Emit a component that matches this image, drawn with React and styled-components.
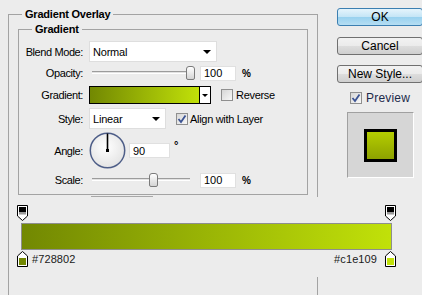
import React from 'react';
import styled, { createGlobalStyle } from 'styled-components';

const GlobalStyle = createGlobalStyle`
  html, body {
    margin: 0;
    padding: 0;
    background: #ececec;
  }
  body {
    font-family: 'Liberation Sans', Arial, sans-serif;
    font-size: 11px;
    color: #000;
  }
`;

const line = '#a3a3a3';

const Page = styled.div`
  display: flex;
  width: 422px;
  height: 295px;
  overflow: hidden;
  background: #ececec;
`;

const Main = styled.div`
  width: 310px;
  padding: 8px 0 0 8px;
  flex-shrink: 0;
`;

const Group = styled.div`
  display: flex;
  flex-direction: column;
  height: ${({ $fill }) => ($fill ? '100%' : 'auto')};
`;

const GroupHead = styled.div`
  display: flex;
  height: 12px;
`;

const HeadCap = styled.div`
  align-self: flex-end;
  height: 5px;
  border-top: 1px solid ${line};
  border-left: ${({ $side }) => ($side === 'left' ? `1px solid ${line}` : 'none')};
  border-right: ${({ $side }) => ($side === 'right' ? `1px solid ${line}` : 'none')};
  width: ${({ $side }) => ($side === 'left' ? '13px' : 'auto')};
  flex: ${({ $side }) => ($side === 'right' ? 1 : 'none')};
`;

const HeadTitle = styled.span`
  padding: 0 3px;
  font-weight: bold;
  line-height: 12px;
  letter-spacing: -0.2px;
  white-space: nowrap;
`;

const GroupBody = styled.div`
  display: flex;
  flex-direction: column;
  border-left: 1px solid ${line};
  border-right: 1px solid ${line};
  border-bottom: ${({ $closed }) => ($closed ? `1px solid ${line}` : 'none')};
  padding: ${({ $pad }) => $pad};
  flex: 1;
`;

const Row = styled.div`
  display: grid;
  grid-template-columns: 64px 1fr;
  column-gap: 6px;
  align-items: center;
  height: ${({ $h }) => $h}px;
  margin-top: ${({ $mt }) => $mt || 0}px;
`;

const Label = styled.span`
  text-align: right;
  letter-spacing: -0.4px;
  white-space: nowrap;
`;

const Controls = styled.div`
  display: flex;
  align-items: center;
  height: 100%;
`;

const Select = styled.div`
  display: flex;
  align-items: center;
  box-sizing: border-box;
  width: ${({ $w }) => $w}px;
  height: 21px;
  padding-left: 3px;
  background: #fff;
  border: 1px solid #dedede;
  letter-spacing: -0.2px;
`;

const Caret = styled.span`
  margin-left: auto;
  margin-right: ${({ $mr }) => $mr ?? 5}px;
  width: 0;
  height: 0;
  border-left: ${({ $s }) => $s}px solid transparent;
  border-right: ${({ $s }) => $s}px solid transparent;
  border-top: ${({ $s }) => $s}px solid #000;
`;

const SliderBox = styled.div`
  position: relative;
  width: 111px;
  height: 16px;
`;

const Track = styled.div`
  margin: 6px 0 0 3px;
  width: 98px;
  height: 1px;
  background: #e2e2e2;
  border-top: 1px solid #9c9c9c;
  border-bottom: 1px solid #fff;
`;

const Thumb = styled.div`
  position: absolute;
  top: 1px;
  width: 7px;
  height: 12px;
  border: 1px solid #7b7b7b;
  border-radius: 3px 3px 2px 2px;
  background: linear-gradient(#ffffff, #d4d4d4);
`;

const Field = styled.div`
  display: flex;
  align-items: center;
  box-sizing: border-box;
  width: ${({ $w }) => $w}px;
  height: 15px;
  padding-left: 3px;
  margin-left: ${({ $ml }) => $ml || 0}px;
  background: #fff;
  border: 1px solid #e0e0e0;
`;

const Unit = styled.span`
  margin-left: 6px;
  font-weight: bold;
  font-size: 10px;
`;

const Degree = styled.span`
  align-self: flex-start;
  margin: 7px 0 0 4px;
  font-size: 11px;
  font-weight: bold;
`;

const Swatch = styled.div`
  display: flex;
  box-sizing: border-box;
  width: 122px;
  height: 18px;
  border: 1px solid #000;
`;

const SwatchFill = styled.div`
  flex: 1;
  background: linear-gradient(to right, #728802, #c1e109);
  border-right: 1px solid #000;
`;

const SwatchArrow = styled.div`
  display: flex;
  align-items: center;
  justify-content: center;
  width: 10px;
  background: #fff;
`;

const Check = styled.div`
  display: flex;
  align-items: center;
  justify-content: center;
  box-sizing: border-box;
  width: 12px;
  height: 12px;
  margin-left: ${({ $ml }) => $ml || 0}px;
  border: 1px solid #8f8f8f;
  background: linear-gradient(135deg, #d6d6d6, #f8f8f8);
`;

const CheckText = styled.span`
  margin-left: ${({ $ml }) => $ml}px;
  font-size: ${({ $fs }) => $fs || 11}px;
  letter-spacing: ${({ $ls }) => $ls ?? -0.3}px;
  white-space: nowrap;
  color: ${({ $c }) => $c || '#000'};
`;

const Splitter = styled.div`
  width: 62px;
  height: 1px;
  margin: 1px 0 0 73px;
  background: #a8a8a8;
`;

const Editor = styled.div`
  display: flex;
  flex-direction: column;
  margin: 0 -100px 0 -9px;
  padding: 8px 0 10px 12px;
  background: #ececec;
`;

const StopRow = styled.div`
  display: flex;
  justify-content: space-between;
  align-items: center;
  width: 379px;
  height: 16px;
  margin-left: -4px;
`;

const Bar = styled.div`
  box-sizing: border-box;
  width: 371px;
  height: 27px;
  margin: 2px 0 1px;
  border: 1px solid #8e8e8e;
  background: linear-gradient(to right, #728802, #c1e109);
`;

const StopSide = styled.div`
  display: flex;
  align-items: center;
`;

const HexText = styled.span`
  margin: ${({ $m }) => $m};
  color: #1a1a1a;
  letter-spacing: 0.1px;
`;

const Side = styled.div`
  display: flex;
  flex-direction: column;
  align-items: flex-start;
  padding: 8px 0 0 19px;
`;

const Button = styled.div`
  display: flex;
  align-items: center;
  justify-content: center;
  box-sizing: border-box;
  flex-shrink: 0;
  width: 86px;
  height: 18px;
  margin-top: ${({ $mt }) => $mt || 0}px;
  border: 1px solid ${({ $primary }) => ($primary ? '#3c7fb1' : '#707070')};
  border-radius: 3px;
  background: ${({ $primary }) =>
    $primary
      ? 'linear-gradient(#e5f4fc 0%, #c4e5f6 50%, #98d1ef 51%, #b6def3 100%)'
      : 'linear-gradient(#f2f2f2 0%, #ebebeb 50%, #dddddd 51%, #cfcfcf 100%)'};
  font-size: 12px;
  color: #000;
`;

const PreviewRow = styled.div`
  display: flex;
  align-items: center;
  margin: 9px 0 0 13px;
  height: 12px;
`;

const PreviewBox = styled.div`
  display: flex;
  align-items: center;
  justify-content: center;
  width: 65px;
  height: 64px;
  margin: 8px 0 0 10px;
  background: #d6d6d6;
  border-top: 1px solid #a0a0a0;
  border-left: 1px solid #a0a0a0;
  border-right: 1px solid #fff;
  border-bottom: 1px solid #fff;
`;

const PreviewSquare = styled.div`
  width: 27px;
  height: 27px;
  border: 3px solid #000;
  background: linear-gradient(#b4cd00, #8ea200);
`;

const CheckMark = () => (
  <svg width="10" height="10" viewBox="0 0 10 10">
    <path d="M1.5 5 L4 8 L8.5 1.5" fill="none" stroke="#3b5393" strokeWidth="1.8" />
  </svg>
);

const Dial = () => (
  <svg width="37" height="37" viewBox="0 0 37 37">
    <defs>
      <radialGradient id="dialFill" cx="0.45" cy="0.4" r="0.6">
        <stop offset="0" stopColor="#ffffff" />
        <stop offset="1" stopColor="#e4e4e4" />
      </radialGradient>
    </defs>
    <circle cx="18.5" cy="18.5" r="17.2" fill="url(#dialFill)" stroke="#4e5e88" strokeWidth="1.5" />
    <line x1="18.5" y1="1.5" x2="18.5" y2="18.5" stroke="#000" strokeWidth="1.6" />
    <rect x="17" y="17" width="3" height="3" fill="#000" />
  </svg>
);

const TopStop = () => (
  <svg width="11" height="16" viewBox="0 0 11 16">
    <path d="M0.5 0.5 H10.5 V11 L5.5 15.5 L0.5 11 Z" fill="#fff" stroke="#000" />
    <rect x="2" y="2" width="7" height="5" fill="#000" />
    <rect x="2" y="7" width="7" height="2.5" fill="#9a9a9a" />
  </svg>
);

const BottomStop = ({ color }) => (
  <svg width="11" height="16" viewBox="0 0 11 16">
    <path d="M5.5 0.5 L10.5 5 V15.5 H0.5 V5 Z" fill="#fff" stroke="#000" />
    <rect x="2" y="7" width="7" height="7" fill={color} />
  </svg>
);

const Slider = ({ value }) => (
  <SliderBox>
    <Track />
    <Thumb style={{ left: 3 + 98 * value - 4 }} />
  </SliderBox>
);

const App = () => (
  <Page>
    <GlobalStyle />
    <Main>
      <Group $fill>
        <GroupHead>
          <HeadCap $side="left" />
          <HeadTitle>Gradient Overlay</HeadTitle>
          <HeadCap $side="right" />
        </GroupHead>
        <GroupBody $pad="3px 9px 0 9px">
          <Group>
            <GroupHead>
              <HeadCap $side="left" />
              <HeadTitle>Gradient</HeadTitle>
              <HeadCap $side="right" />
            </GroupHead>
            <GroupBody $closed $pad="0 0 6px 0">
              <Row $h={21} $mt={6}>
                <Label>Blend Mode:</Label>
                <Controls>
                  <Select $w={128}>
                    Normal
                    <Caret $s={4} />
                  </Select>
                </Controls>
              </Row>
              <Row $h={16} $mt={3}>
                <Label>Opacity:</Label>
                <Controls>
                  <Slider value={1} />
                  <Field $w={36}>100</Field>
                  <Unit>%</Unit>
                </Controls>
              </Row>
              <Row $h={18} $mt={5}>
                <Label>Gradient:</Label>
                <Controls>
                  <Swatch>
                    <SwatchFill />
                    <SwatchArrow>
                      <Caret $s={3} $mr={0} style={{ marginLeft: 0 }} />
                    </SwatchArrow>
                  </Swatch>
                  <Check $ml={10} />
                  <CheckText $ml={3}>Reverse</CheckText>
                </Controls>
              </Row>
              <Row $h={21} $mt={4}>
                <Label>Style:</Label>
                <Controls>
                  <Select $w={77}>
                    Linear
                    <Caret $s={4} />
                  </Select>
                  <Check $ml={10}>
                    <CheckMark />
                  </Check>
                  <CheckText $ml={2}>Align with Layer</CheckText>
                </Controls>
              </Row>
              <Row $h={37} $mt={3}>
                <Label>Angle:</Label>
                <Controls>
                  <Dial />
                  <Field $w={41} $ml={3}>90</Field>
                  <Degree>°</Degree>
                </Controls>
              </Row>
              <Row $h={16} $mt={3}>
                <Label>Scale:</Label>
                <Controls>
                  <Slider value={0.62} />
                  <Field $w={36}>100</Field>
                  <Unit>%</Unit>
                </Controls>
              </Row>
            </GroupBody>
          </Group>
          <Splitter />
          <Editor>
            <StopRow>
              <TopStop />
              <TopStop />
            </StopRow>
            <Bar />
            <StopRow>
              <StopSide>
                <BottomStop color="#728802" />
                <HexText $m="0 0 0 4px">#728802</HexText>
              </StopSide>
              <StopSide>
                <HexText $m="0 8px 0 0">#c1e109</HexText>
                <BottomStop color="#c1e109" />
              </StopSide>
            </StopRow>
          </Editor>
        </GroupBody>
      </Group>
    </Main>
    <Side>
      <Button $primary>OK</Button>
      <Button $mt={11}>Cancel</Button>
      <Button $mt={10}>New Style...</Button>
      <PreviewRow>
        <Check>
          <CheckMark />
        </Check>
        <CheckText $ml={4} $fs={12} $ls={0.2} $c="#1c2a4a">Preview</CheckText>
      </PreviewRow>
      <PreviewBox>
        <PreviewSquare />
      </PreviewBox>
    </Side>
  </Page>
);

export default App;
